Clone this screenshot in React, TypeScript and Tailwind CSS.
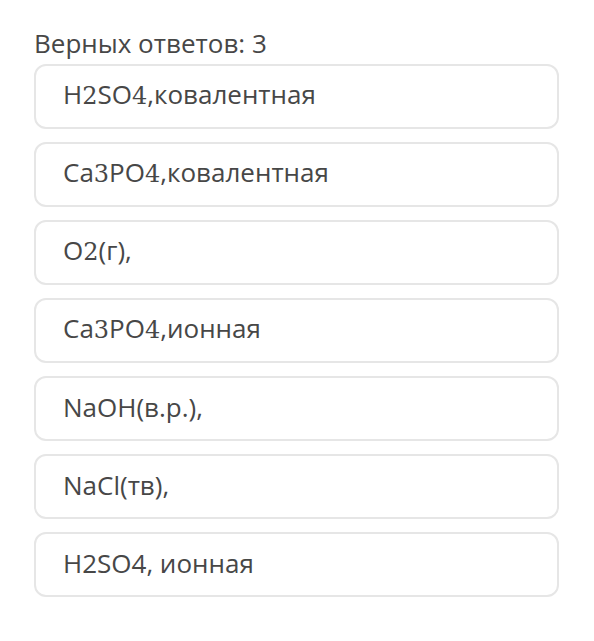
const serif = "font-['DejaVu_Serif',serif] text-[24px]";

type Part = string | { d: string };

const answers: Part[][] = [
  ["H", { d: "2" }, "SO", { d: "4" }, ",ковалентная"],
  ["Ca", { d: "3" }, "PO", { d: "4" }, ",ковалентная"],
  ["O", { d: "2" }, "(г),"],
  ["Ca", { d: "3" }, "PO", { d: "4" }, ",ионная"],
  ["NaOH(в.р.),"],
  ["NaCl(тв),"],
  ["H2SO4, ионная"],
];

export default function App() {
  return (
    <div className="min-h-[641px] w-[594px] bg-white pl-[34px] pt-[26px] font-['Open_Sans',sans-serif] text-[#474747]">
      <h1 className="text-[26px] leading-[34px]">Верных ответов: 3</h1>
      <div className="mt-[4px] flex w-[525px] flex-col gap-[13px]">
        {answers.map((parts, i) => (
          <div
            key={i}
            className="flex h-[65px] items-center rounded-[12px] border-2 border-[#e6e6e6] pb-[4px] pl-[27px] text-[26px] leading-none"
          >
            <span>
              {parts.map((p, j) =>
                typeof p === "string" ? (
                  <span key={j}>{p}</span>
                ) : (
                  <span key={j} className={serif}>
                    {p.d}
                  </span>
                )
              )}
            </span>
          </div>
        ))}
      </div>
    </div>
  );
}
